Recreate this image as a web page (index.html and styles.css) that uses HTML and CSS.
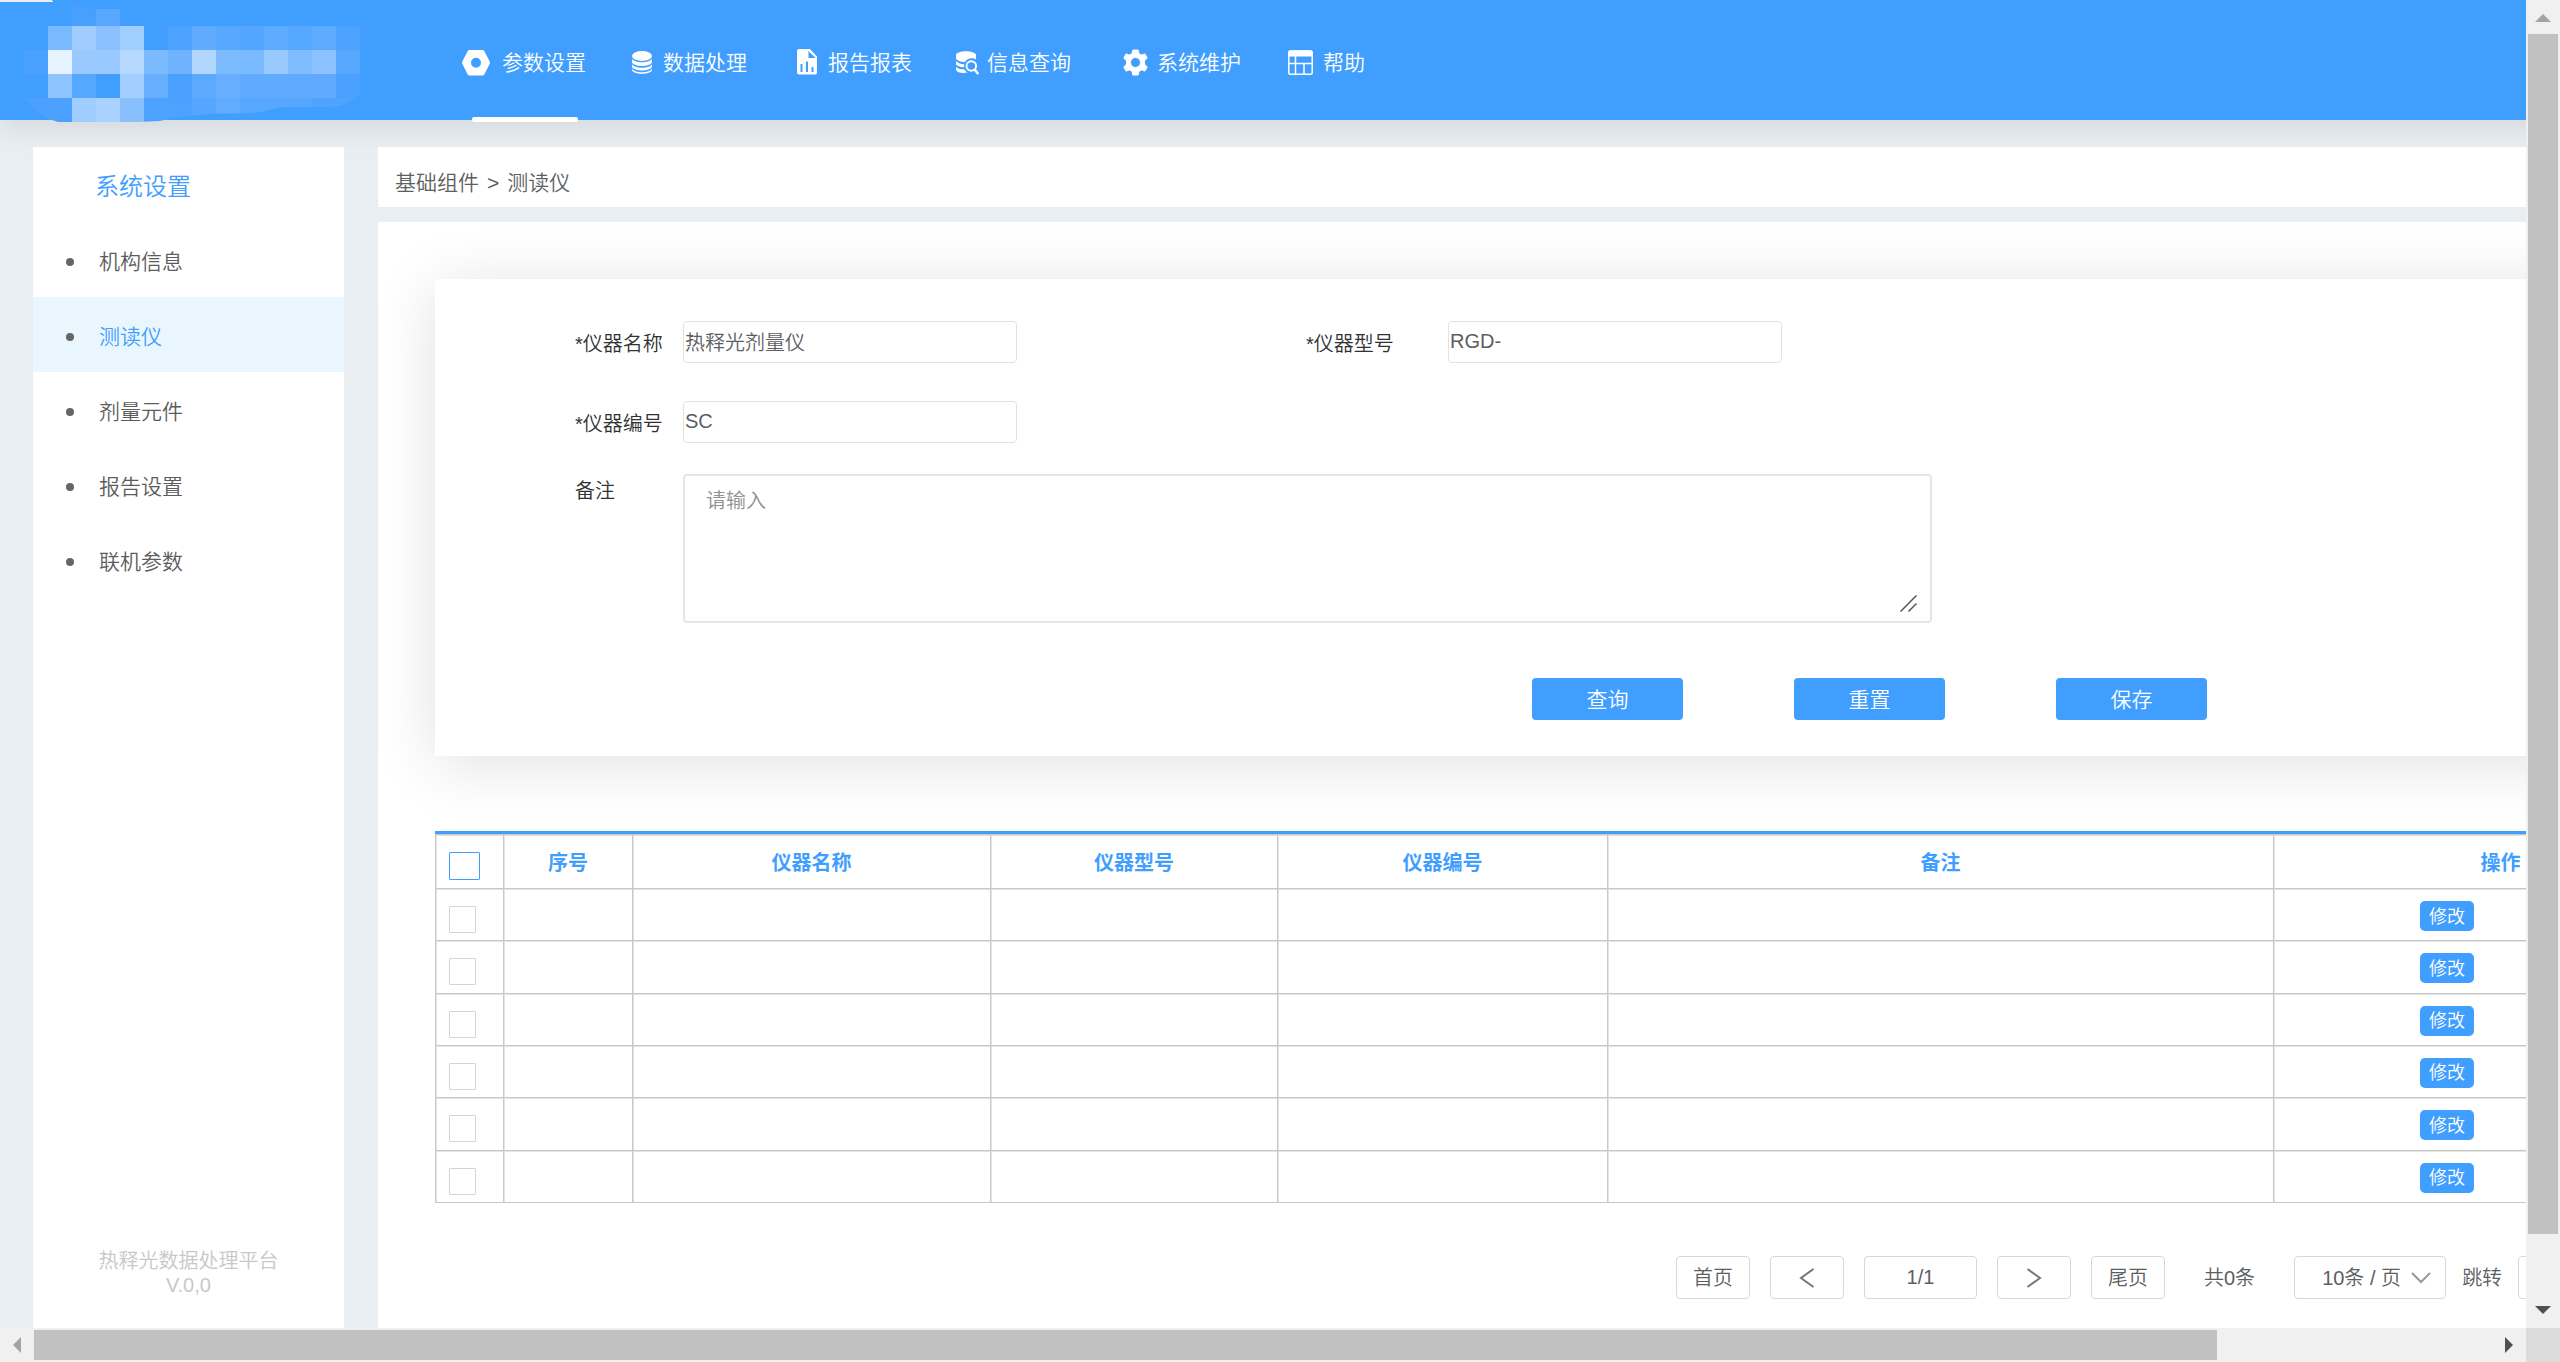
FILE: index.html
```html
<!DOCTYPE html>
<html lang="zh-CN">
<head>
<meta charset="utf-8">
<title>热释光数据处理平台</title>
<link rel="stylesheet" href="styles.css">
</head>
<body class="window">
<div class="viewport">
  <div class="canvas">
    <header class="header">
      <svg class="logo" width="360" height="122" viewBox="0 0 360 122" shape-rendering="crispEdges" aria-hidden="true">
        <defs><clipPath id="logo-edge"><path d="M24 0H360V94C352 101 344 106 332 107H286C276 108 268 111 255 113L208 114C190 116 172 117 160 121L137 122H58C44 118 32 110 24 96Z"/></clipPath></defs>
        <path fill="#e8eef5" d="M0 0H51L54 2H0Z"/>
        <g clip-path="url(#logo-edge)">
          <path fill="#489ffe" d="M72 5L86 9H96V26H72Z"/><path fill="#57a8fe" d="M96 9H120V26H96Z"/>
          <path fill="#78b9ff" d="M48 26h24v24H48z"/><path fill="#a0ccff" d="M72 26h24v24H72z"/><path fill="#8bc1fe" d="M96 26h24v24H96z"/><path fill="#9fceff" d="M120 26h24v24h-24z"/><path fill="#4ca2fe" d="M168 26h24v24h-24z"/><path fill="#61abff" d="M192 26h24v24h-24z"/><path fill="#59a8ff" d="M216 26h24v24h-24z"/><path fill="#54a5ff" d="M240 26h24v24h-24z"/><path fill="#5fabff" d="M264 26h24v24h-24z"/><path fill="#55a7ff" d="M288 26h24v24h-24z"/><path fill="#5eabff" d="M312 26h24v24h-24z"/><path fill="#4ea2ff" d="M336 26h24v24h-24z"/>
          <path fill="#4ba1ff" d="M24 50h24v24H24z"/><path fill="#e6f2ff" d="M48 50h24v24H48z"/><path fill="#99c9fe" d="M72 50h48v24H72z"/><path fill="#b7d9ff" d="M120 50h24v24h-24z"/><path fill="#7cbaff" d="M144 50h24v24h-24z"/><path fill="#6fb3ff" d="M168 50h24v24h-24z"/><path fill="#b1d7ff" d="M192 50h24v24h-24z"/><path fill="#7dbbff" d="M216 50h24v24h-24z"/><path fill="#79b9ff" d="M240 50h24v24h-24z"/><path fill="#99caff" d="M264 50h24v24h-24z"/><path fill="#80bdff" d="M288 50h24v24h-24z"/><path fill="#8bc2ff" d="M312 50h24v24h-24z"/><path fill="#58a7ff" d="M336 50h24v24h-24z"/>
          <path fill="#8dc3ff" d="M48 74h24v24H48z"/><path fill="#56a7fe" d="M72 74h24v24H72z"/><path fill="#a2cfff" d="M120 74h24v24h-24z"/><path fill="#68aeff" d="M144 74h24v24h-24z"/><path fill="#4aa1ff" d="M168 74h24v24h-24z"/><path fill="#5baaff" d="M192 74h24v24h-24z"/><path fill="#68b0ff" d="M216 74h24v24h-24z"/><path fill="#60abff" d="M240 74h96v24h-96z"/><path fill="#4aa1ff" d="M336 74h24v24h-24z"/>
          <path fill="#4ca1ff" d="M24 98h48v24H24z"/><path fill="#a0cdff" d="M72 98h24v24H72z"/><path fill="#a9d2ff" d="M96 98h24v24H96z"/><path fill="#88c0fd" d="M120 98h24v24h-24z"/><path fill="#4ea2ff" d="M144 98h48v24h-48z"/><path fill="#55a6ff" d="M192 98h24v24h-24z"/><path fill="#61acff" d="M216 98h24v24h-24z"/><path fill="#58a7fe" d="M240 98h72v24h-72z"/><path fill="#50a4ff" d="M312 98h48v24h-48z"/>
        </g>
      </svg>
      <nav class="nav">
        <a class="nav-item nav-item-active" href="#">
          <svg width="32" height="28" viewBox="0 0 32 28" aria-hidden="true"><path fill="#fff" fill-rule="evenodd" d="M7.500 1h13q1.200 0 1.800 1l5.400 10.600q.5 1.100 0 2.200L22.300 25.500q-.6 1-1.800 1h-13q-1.200 0-1.800-1L.3 14.800q-.5-1.100 0-2.200L5.700 2q.6-1 1.800-1zM14 8.800a5 5 0 1 0 0 10 5 5 0 0 0 0-10z"/></svg>
          <span>参数设置</span>
        </a>
        <a class="nav-item" href="#">
          <svg width="25" height="28" viewBox="-2 0 25 28" aria-hidden="true"><g fill="#fff"><ellipse cx="10" cy="7" rx="10" ry="5"/><path d="M0 9.500c2 5 18 5 20 0v3.700c-2 5-18 5-20 0zM0 15c2 5 18 5 20 0v2.700c-2 5-18 5-20 0zM0 19.600c2 5 18 5 20 0v1.400c-1 5-19 5-20 0z"/></g></svg>
          <span>数据处理</span>
        </a>
        <a class="nav-item" href="#">
          <svg width="29" height="28" viewBox="-6 0 29 28" aria-hidden="true"><path fill="#fff" fill-rule="evenodd" d="M2 0h11l7 7.500V23.500q0 2-2 2H2q-2 0-2-2V2q0-2 2-2zM11.500 2v7h7zM3.500 15v8h2v-8zM9 12.500V23h2V12.500zM14.500 18v5h2v-5z"/></svg>
          <span>报告报表</span>
        </a>
        <a class="nav-item" href="#">
          <svg width="23" height="28" viewBox="0 0 23 28" aria-hidden="true"><g fill="#fff"><path d="M0 6c1-5 19-5 20 0v4.500c-3-2-9-1.500-11 2.500C5 13 1 11.500 0 9.500zM0 12c2 2 4 3 8 3.300l.1 2.900C4 18 1 17 0 15.500zM0 18c2 1.700 5 2.500 8.500 2.500 1 1.700 2 2.500 3 3C6 24.500 1 23.500 0 21z"/></g><g fill="none" stroke="#fff" stroke-width="2"><circle cx="15.300" cy="17" r="4.800"/><path d="M18.700 20.500l3.500 4.500" stroke-width="2.500"/></g></svg>
          <span>信息查询</span>
        </a>
        <a class="nav-item" href="#">
          <svg width="34" height="28" viewBox="-8 0 34 28" aria-hidden="true"><path fill="#fff" fill-rule="evenodd" stroke="#fff" stroke-linejoin="round" d="M9.800 1h5.400l.7 3.600 2.600 1.500 3.500-1.200 2.200 4.100-2.800 2.900v3.200l2.800 2.900-2.200 4.100-3.500-1.200-2.600 1.500-.7 3.600H9.800l-.7-3.600-2.600-1.500L3 22.100.8 18l2.800-2.900v-3.200L.8 9 3 4.900l3.500 1.200 2.600-1.500zM12.500 8.500a5 5 0 1 0 0 10 5 5 0 0 0 0-10z"/></svg>
          <span>系统维护</span>
        </a>
        <a class="nav-item" href="#">
          <svg width="30" height="28" viewBox="-3 0 30 28" aria-hidden="true"><g fill="none" stroke="#fff" stroke-width="1.500"><rect x=".8" y="2" width="23.400" height="23.200" rx="1.500"/><path d="M1 14.500h23M7.500 7v18M16 14.500v10.500"/></g><path fill="#fff" d="M2 1.500h21q1.500 0 1.500 1.500v4.500H.5V3Q.5 1.500 2 1.500z"/></svg>
          <span>帮助</span>
        </a>
      </nav>
    </header>

    <div class="body">
      <aside class="sidebar">
        <h1 class="sidebar-title">系统设置</h1>
        <ul class="menu">
          <li><a class="menu-item" href="#">机构信息</a></li>
          <li><a class="menu-item menu-item-active" href="#">测读仪</a></li>
          <li><a class="menu-item" href="#">剂量元件</a></li>
          <li><a class="menu-item" href="#">报告设置</a></li>
          <li><a class="menu-item" href="#">联机参数</a></li>
        </ul>
        <p class="version">热释光数据处理平台<br>V.0,0</p>
      </aside>

      <main class="main">
        <div class="breadcrumb"><span>基础组件</span><span>&gt;</span><span>测读仪</span></div>
        <section class="panel">
          <form class="form">
            <div class="fields">
              <label for="name">*仪器名称</label>
              <input class="field" id="name" type="text" value="热释光剂量仪">
              <label class="label-model" for="model">*仪器型号</label>
              <input class="field" id="model" type="text" value="RGD-">
              <label class="label-code" for="code">*仪器编号</label>
              <input class="field" id="code" type="text" value="SC">
            </div>
            <div class="remark">
              <label for="remark">备注</label>
              <div class="remark-box">
                <textarea class="remark-text" id="remark" placeholder="请输入"></textarea>
                <svg class="grip" width="17" height="17" viewBox="0 0 17 17" aria-hidden="true"><path fill="none" stroke="#555" stroke-width="1.500" d="M.5 16.500l16-16M8.500 16.500l8-8"/></svg>
              </div>
            </div>
            <div class="actions">
              <button class="action" type="button">查询</button>
              <button class="action" type="button">重置</button>
              <button class="action" type="button">保存</button>
            </div>
          </form>

          <table class="grid">
            <colgroup><col class="col-check"><col class="col-index"><col class="col-name"><col class="col-model"><col class="col-code"><col class="col-remark"><col class="col-edit"></colgroup>
            <thead>
              <tr><th class="cell-check"><input class="check check-all" type="checkbox" aria-label="全选"></th><th>序号</th><th>仪器名称</th><th>仪器型号</th><th>仪器编号</th><th>备注</th><th>操作</th></tr>
            </thead>
            <tbody>
              <tr><td class="cell-check"><input class="check" type="checkbox" aria-label="选择"></td><td></td><td></td><td></td><td></td><td></td><td class="cell-edit"><button class="edit" type="button">修改</button></td></tr>
              <tr><td class="cell-check"><input class="check" type="checkbox" aria-label="选择"></td><td></td><td></td><td></td><td></td><td></td><td class="cell-edit"><button class="edit" type="button">修改</button></td></tr>
              <tr><td class="cell-check"><input class="check" type="checkbox" aria-label="选择"></td><td></td><td></td><td></td><td></td><td></td><td class="cell-edit"><button class="edit" type="button">修改</button></td></tr>
              <tr><td class="cell-check"><input class="check" type="checkbox" aria-label="选择"></td><td></td><td></td><td></td><td></td><td></td><td class="cell-edit"><button class="edit" type="button">修改</button></td></tr>
              <tr><td class="cell-check"><input class="check" type="checkbox" aria-label="选择"></td><td></td><td></td><td></td><td></td><td></td><td class="cell-edit"><button class="edit" type="button">修改</button></td></tr>
              <tr><td class="cell-check"><input class="check" type="checkbox" aria-label="选择"></td><td></td><td></td><td></td><td></td><td></td><td class="cell-edit"><button class="edit" type="button">修改</button></td></tr>
            </tbody>
          </table>

          <div class="pager">
            <button class="page-button" type="button">首页</button>
            <button class="page-button" type="button" aria-label="上一页"><svg width="16" height="20" viewBox="0 0 16 20"><path fill="none" stroke="#777" stroke-width="2" d="M14.500 1L2 10l12.500 9"/></svg></button>
            <input class="page-current" type="text" value="1/1" aria-label="当前页">
            <button class="page-button" type="button" aria-label="下一页"><svg width="16" height="20" viewBox="0 0 16 20"><path fill="none" stroke="#777" stroke-width="2" d="M1.500 1L14 10 1.500 19"/></svg></button>
            <button class="page-button" type="button">尾页</button>
            <span class="page-total">共0条</span>
            <div class="page-jump">
              <div class="page-size">
                <select class="page-select" aria-label="每页条数"><option>10条 / 页</option></select>
                <svg class="chevron" width="20" height="12" viewBox="0 0 20 12" aria-hidden="true"><path fill="none" stroke="#999" stroke-width="2" d="M1 1l9 9 9-9"/></svg>
              </div>
              <label for="jump">跳转</label>
              <input class="page-target" id="jump" type="text">
            </div>
          </div>
        </section>
      </main>
    </div>
  </div>
</div>

<div class="scrollbar-y" aria-hidden="true">
  <span class="arrow arrow-up"></span>
  <div class="track-y"><div class="thumb-y"></div></div>
  <span class="arrow arrow-down"></span>
</div>
<div class="scrollbar-x" aria-hidden="true">
  <span class="arrow arrow-left"></span>
  <div class="track-x"><div class="thumb-x"></div></div>
  <span class="arrow arrow-right"></span>
</div>
<div class="corner"></div>
</body>
</html>
```
FILE: styles.css
```css
* {
  box-sizing: border-box;
}

.window {
  display: grid;
  grid-template-columns: minmax(0, 1fr) 34px;
  grid-template-rows: minmax(0, 1fr) 34px;
  height: 100vh;
  margin: 0;
  overflow: hidden;
  color: #5c5e62;
  font: 350 20px/24px "Liberation Sans", "Noto Sans CJK SC", sans-serif;
}

.window button,
.window input,
.window select,
.window textarea {
  margin: 0;
  color: inherit;
  font: inherit;
}

.viewport {
  overflow: hidden;
}

.canvas {
  display: flex;
  flex-direction: column;
  width: calc(100% + 318px);
  min-height: 100%;
  background: #e9eef3;
}

.header {
  display: flex;
  align-items: flex-start;
  height: 120px;
  background: #409eff;
  box-shadow: 0 6px 30px rgba(0, 0, 0, 0.1);
}

.logo {
  flex: none;
}

.nav {
  display: flex;
  gap: 44px;
  margin-left: 102px;
}

.nav-item {
  position: relative;
  display: flex;
  align-items: center;
  gap: 8px;
  height: 120px;
  padding-top: 5px;
  color: #fff;
  font-size: 21px;
  text-decoration: none;
}

.nav-item-active::after {
  content: "";
  position: absolute;
  right: 8px;
  bottom: -2px;
  left: 10px;
  height: 5px;
  border-radius: 2px;
  background: #fff;
}

.body {
  display: flex;
  flex: 1;
  gap: 34px;
  padding: 27px 60px 0 33px;
}

.sidebar {
  display: flex;
  flex: none;
  flex-direction: column;
  width: 311px;
  background: #fff;
}

.sidebar-title {
  margin: 0;
  padding: 24px 62px 19px;
  color: #409eff;
  font-size: 24px;
  font-weight: 350;
  line-height: 32px;
}

.menu {
  margin: 0;
  padding: 0;
  list-style: none;
}

.menu-item {
  display: flex;
  align-items: center;
  gap: 25px;
  height: 75px;
  padding: 5px 0 0 33px;
  color: #5c5c5c;
  font-size: 21px;
  text-decoration: none;
}

.menu-item::before {
  content: "";
  width: 8px;
  height: 8px;
  border-radius: 50%;
  background: #666;
}

.menu-item-active {
  background: #eaf6fe;
  color: #409eff;
}

.version {
  margin: auto 0 31px;
  color: #c8c8c8;
  text-align: center;
}

.main {
  display: flex;
  flex: 1;
  flex-direction: column;
  gap: 15px;
  min-width: 0;
}

.breadcrumb {
  display: flex;
  align-items: center;
  gap: 8px;
  height: 60px;
  padding: 11px 17px 0;
  background: #fff;
  font-size: 21px;
}

.panel {
  flex: 1;
  padding: 57px 57px 29px;
  background: #fff;
}

.form {
  padding: 42px 140px 36px;
  background: #fff;
  box-shadow: 0 8px 60px rgba(0, 0, 0, 0.12);
  color: #303133;
}

.fields {
  display: grid;
  grid-template-columns: 108px 334px 289px 142px 334px;
  align-items: center;
  row-gap: 38px;
}

.fields label {
  padding-top: 4px;
}

.label-model {
  grid-column: 4;
}

.label-code {
  grid-column: 1;
}

.window .field {
  width: 100%;
  height: 42px;
  padding: 0 1px 2px;
  border: 1px solid #e2e2e2;
  border-radius: 4px;
  background: #fff;
  color: #5c5e62;
}

.remark {
  display: flex;
  margin-top: 31px;
}

.remark label {
  flex: none;
  width: 108px;
  padding-top: 5px;
}

.remark-box {
  position: relative;
  flex: none;
  width: 1249px;
  height: 149px;
  border: 2px solid #e6e6e6;
  border-radius: 4px;
}

.window .remark-text {
  display: block;
  width: 100%;
  height: 100%;
  padding: 13px 21px;
  border: 0;
  background: none;
  resize: none;
}

.remark-text::placeholder {
  color: #909090;
}

.grip {
  position: absolute;
  right: 13px;
  bottom: 9px;
}

.actions {
  display: flex;
  gap: 111px;
  margin-top: 55px;
  padding-left: 957px;
}

.window .action {
  flex: none;
  width: 151px;
  height: 42px;
  padding: 2px 0 0;
  border: 0;
  border-radius: 4px;
  background: #409eff;
  color: #fff;
  font-size: 21px;
}

.grid {
  width: 100%;
  height: 372px;
  margin-top: 75px;
  border-top: 3px solid #409eff;
  border-right: 1px solid #c8c8c8;
  border-bottom: 1px solid #c8c8c8;
  border-spacing: 0;
  table-layout: fixed;
}

.grid th,
.grid td {
  padding: 0;
  border-top: 1px solid #c8c8c8;
  border-left: 1px solid #c8c8c8;
  box-shadow: inset 1px 1px 0 #e4e4e4;
}

.grid th {
  height: 54px;
  padding-top: 3px;
  color: #409eff;
  font-weight: 700;
}

.grid td {
  height: 52px;
}

.col-check { width: 68px; }
.col-index { width: 129px; }
.col-name { width: 358px; }
.col-model { width: 287px; }
.col-code { width: 330px; }
.col-remark { width: 666px; }
.col-edit { width: 454px; }

.grid .cell-check {
  padding: 17px 0 0 13px;
  text-align: left;
  vertical-align: top;
}

.check {
  display: block;
  width: 27px;
  height: 27px;
  border: 1px solid #d4d4d4;
  border-radius: 1px;
  background: #fff;
  appearance: none;
}

.check-all {
  width: 31px;
  height: 28px;
  border-color: #409eff;
}

.grid .cell-edit {
  padding: 12px 0 0 146px;
  vertical-align: top;
}

.window .edit {
  display: block;
  width: 54px;
  height: 30px;
  padding: 1px 0 0;
  border: 0;
  border-radius: 5px;
  background: #409eff;
  color: #fff;
  font-size: 18px;
}

.pager,
.page-jump {
  display: flex;
  align-items: center;
}

.pager {
  gap: 20px;
  margin-top: 53px;
  margin-left: 1241px;
}

.page-jump {
  gap: 16px;
}

.window .page-button,
.window .page-current,
.window .page-select,
.window .page-target {
  flex: none;
  height: 43px;
  padding: 0;
  border: 1px solid #d8d8d8;
  border-radius: 4px;
  background: #fff;
}

.page-button {
  display: flex;
  align-items: center;
  justify-content: center;
  width: 74px;
}

.page-current {
  width: 113px;
  text-align: center;
}

.page-total {
  flex: none;
  margin: 0 19px;
}

.page-size {
  position: relative;
}

.window .page-select {
  display: block;
  width: 152px;
  padding-left: 27px;
  appearance: none;
}

.chevron {
  position: absolute;
  top: 16px;
  right: 15px;
}

.page-target {
  width: 80px;
}

.scrollbar-y,
.scrollbar-x {
  display: flex;
  align-items: center;
  justify-content: space-between;
  background: #f0f0f0;
}

.scrollbar-y {
  flex-direction: column;
  padding: 14px 2px;
}

.scrollbar-x {
  padding: 2px 13px;
}

.track-y {
  flex: 1;
  width: 100%;
  margin: 12px 0;
}

.thumb-y {
  height: 95.2%;
  background: #c1c1c1;
}

.track-x {
  flex: 1;
  height: 100%;
  margin: 0 13px;
}

.thumb-x {
  width: 88.8%;
  height: 100%;
  background: #c1c1c1;
}

.arrow {
  background: #505050;
}

.arrow-up {
  width: 16px;
  height: 8px;
  background: #a3a3a3;
  clip-path: polygon(50% 0, 100% 100%, 0 100%);
}

.arrow-down {
  width: 16px;
  height: 8px;
  clip-path: polygon(0 0, 100% 0, 50% 100%);
}

.arrow-left {
  width: 8px;
  height: 16px;
  background: #a3a3a3;
  clip-path: polygon(100% 0, 100% 100%, 0 50%);
}

.arrow-right {
  width: 8px;
  height: 16px;
  clip-path: polygon(0 0, 100% 50%, 0 100%);
}

.corner {
  background: #dcdcdc;
}
```
